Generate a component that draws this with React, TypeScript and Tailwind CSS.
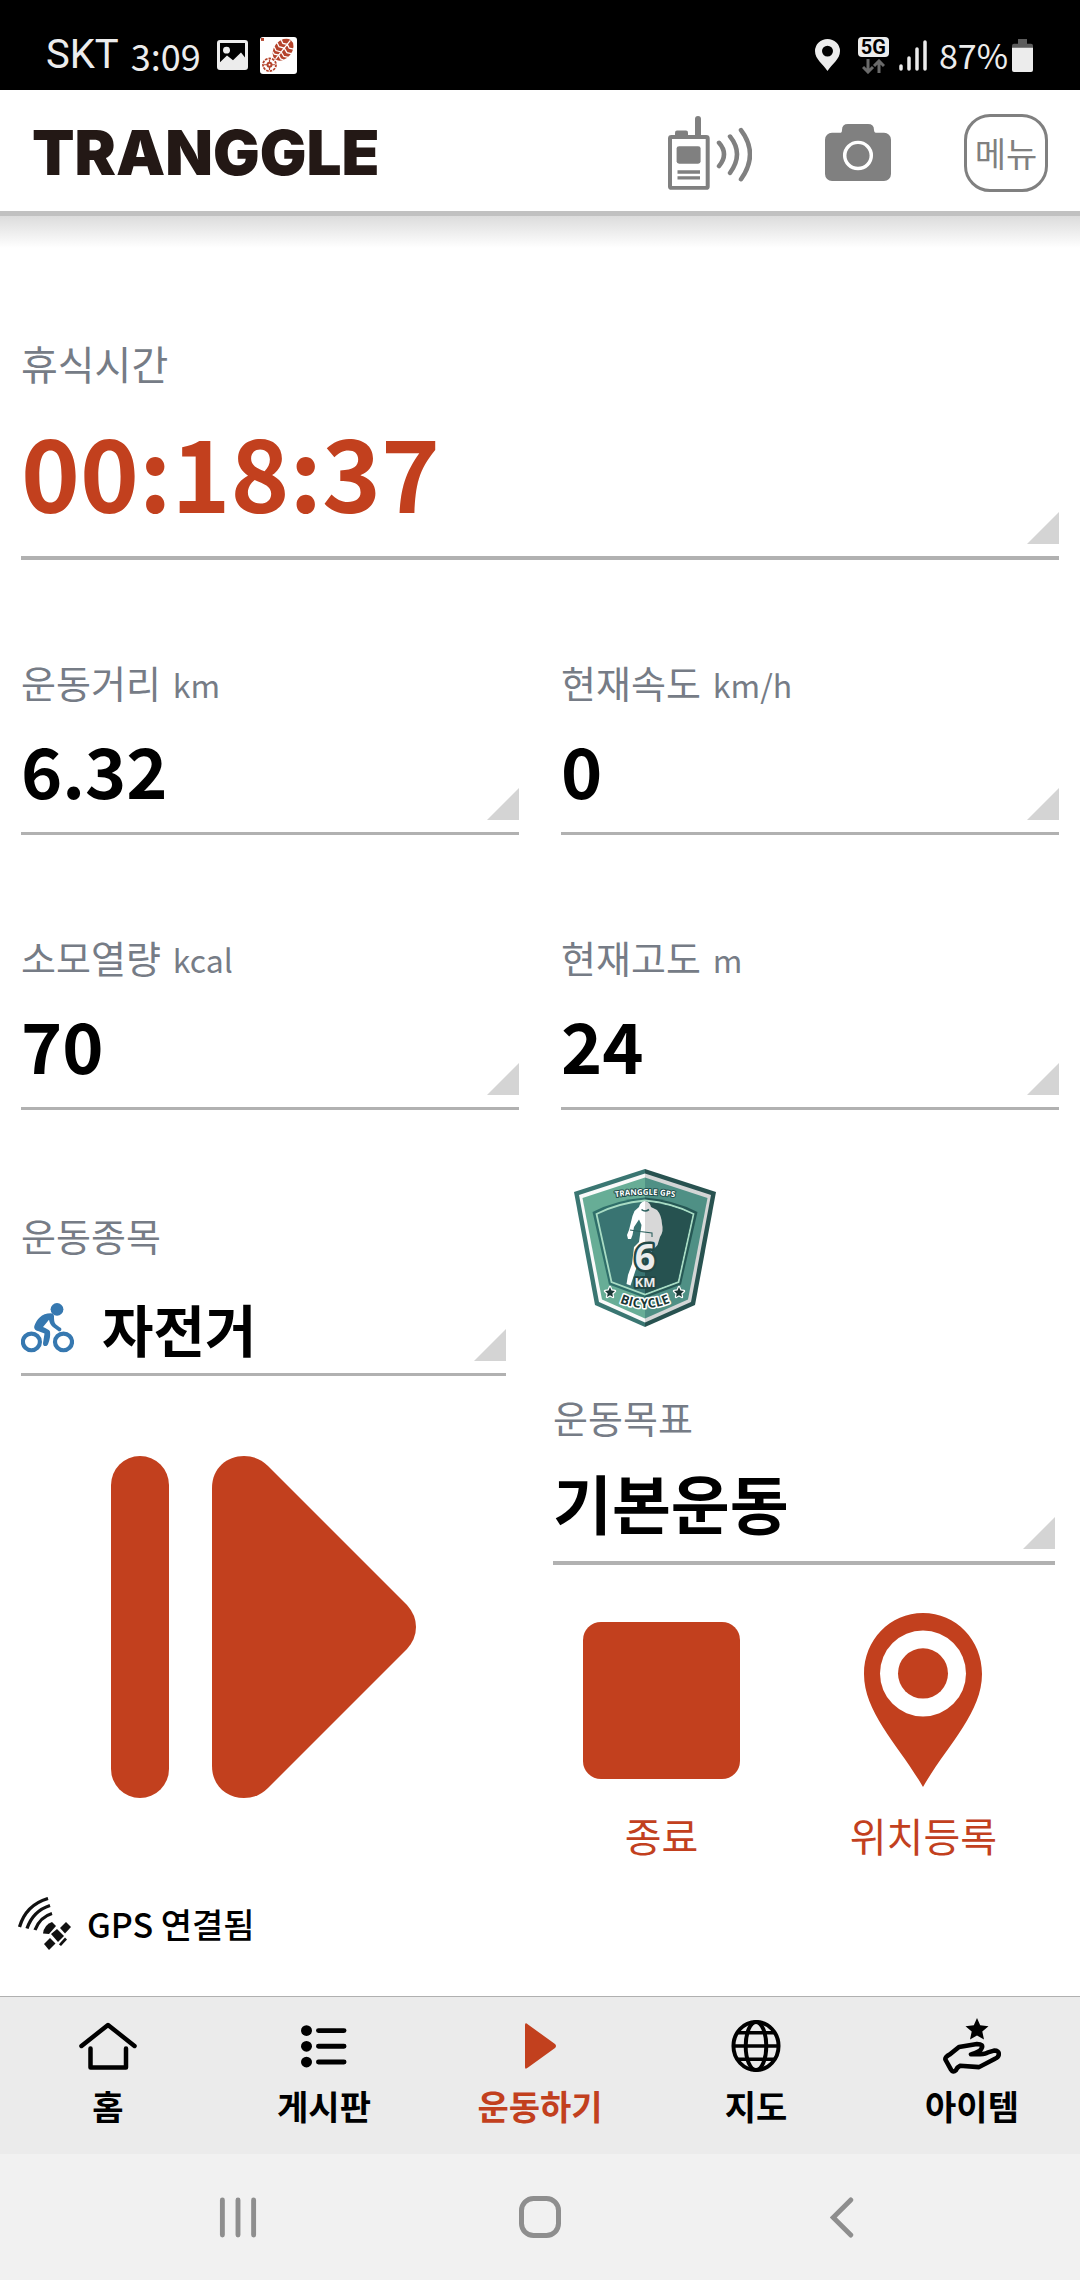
import React from "react";

interface StatCardProps {
  label: string;
  unit?: string;
  value: string;
}

interface GoalCardProps {
  label: string;
  value: string;
}

interface TabProps {
  label: string;
  active?: boolean;
  children: React.ReactNode;
}

function Corner() {
  return (
    <svg className="mb-3 h-8 w-8 shrink-0 self-end" viewBox="0 0 32 32" aria-hidden="true">
      <path d="M32 0V32H0Z" fill="#d4d4d4" />
    </svg>
  );
}

function StatCard({ label, unit, value }: StatCardProps) {
  return (
    <button type="button" className="flex flex-col border-b-[3px] border-[#b1b1b1] text-left">
      <span className="flex items-baseline gap-3 text-[38px] leading-[48px] text-[#767c86]">
        {label}
        {unit && <span className="text-[32px] leading-[32px]">{unit}</span>}
      </span>
      <span className="flex h-[126px] w-full items-center justify-between">
        <span className="text-[70px] leading-[72px] font-bold text-black">{value}</span>
        <Corner />
      </span>
    </button>
  );
}

function GoalCard({ label, value }: GoalCardProps) {
  return (
    <button type="button" className="mt-[66px] flex w-full flex-col border-b-4 border-[#b1b1b1] text-left">
      <span className="text-[38px] leading-[48px] text-[#767c86]">{label}</span>
      <span className="flex h-[120px] w-full items-center justify-between">
        <span className="text-[64px] leading-[72px] font-bold text-black">{value}</span>
        <Corner />
      </span>
    </button>
  );
}

function Tab({ label, active = false, children }: TabProps) {
  return (
    <a
      href="#"
      aria-current={active ? "page" : undefined}
      className={`flex flex-1 flex-col items-center gap-3 ${active ? "text-[#c2401e]" : "text-black"}`}
    >
      <span className="flex h-14 items-center">{children}</span>
      <span className="text-[34px] leading-[40px] font-bold">{label}</span>
    </a>
  );
}

function ShoeIcon() {
  return (
    <svg width="37" height="37" viewBox="0 0 37 38" preserveAspectRatio="none" aria-hidden="true">
      <rect width="37" height="38" rx="3" fill="#fff" />
      <rect x="1" y="1" width="3" height="3" fill="#b5442c" />
      <g transform="rotate(38 23 13)">
        <ellipse cx="23" cy="13" rx="9" ry="12.5" fill="#b5442c" />
        <path
          d="M15 6l4 2 4-2 4 2 4-2M14 11l4 2 5-2 5 2 4-2M14 16l4 2 5-2 5 2 4-2M16 21l3 1 4-2 4 2 3-1M23 1v24"
          stroke="#fff"
          strokeWidth="1.3"
          fill="none"
        />
      </g>
      <circle cx="9.5" cy="28.5" r="6.5" fill="none" stroke="#b5442c" strokeWidth="1.8" strokeDasharray="2.6 1" />
      <circle cx="9.5" cy="28.5" r="3" fill="#b5442c" />
      <path d="M9.5 23v11M4 28.5h11" stroke="#b5442c" strokeWidth="1.2" />
      <circle cx="9.5" cy="28.5" r="1" fill="#fff" />
    </svg>
  );
}

function StatusBar() {
  return (
    <div className="flex h-[90px] items-center justify-between bg-black pt-5 pr-[47px] pl-[46px] text-[#ececec]">
      <div className="flex items-center">
        <span className="font-['Roboto'] text-[40px] leading-[48px]">SKT</span>
        <span className="ml-3 text-[36px] leading-[48px]">3:09</span>
        <svg className="ml-4" width="31" height="30" viewBox="0 0 31 31" preserveAspectRatio="none" aria-hidden="true">
          <path
            fillRule="evenodd"
            fill="currentColor"
            d="M3 0H28a3 3 0 0 1 3 3V28a3 3 0 0 1-3 3H3a3 3 0 0 1-3-3V3A3 3 0 0 1 3 0ZM3 3V23L10 16L16 21L24 13L28 18V3Z"
          />
          <circle cx="9.5" cy="10.5" r="3.5" fill="currentColor" />
        </svg>
        <span className="ml-3">
          <ShoeIcon />
        </span>
      </div>
      <div className="flex items-center">
        <svg width="25" height="32" viewBox="0 0 25 33" preserveAspectRatio="none" aria-hidden="true">
          <path
            fillRule="evenodd"
            fill="currentColor"
            d="M12.5 0A12.5 12.5 0 0 1 25 12.5C25 21 17 26 12.5 33C8 26 0 21 0 12.5A12.5 12.5 0 0 1 12.5 0ZM12.5 7a5.5 5.5 0 1 0 0 11a5.5 5.5 0 0 0 0-11Z"
          />
        </svg>
        <span className="ml-[18px] flex flex-col items-center">
          <span className="rounded bg-[#ececec] px-[3px] font-['Roboto'] text-[20px] leading-[20px] font-bold text-black">
            5G
          </span>
          <svg className="mt-0.5" width="23" height="15" viewBox="0 0 23 15" aria-hidden="true">
            <path
              d="M6 0V12M1 8L6 13L11 8M17 14V2M12 7L17 2L22 7"
              fill="none"
              stroke="#6a6a6a"
              strokeWidth="3"
            />
          </svg>
        </span>
        <svg className="ml-[10px]" width="28" height="31" viewBox="0 0 28 31" aria-hidden="true">
          <path
            d="M2 26V29M10 18V29M18 9V29M26 2V29"
            stroke="currentColor"
            strokeWidth="3.5"
            strokeLinecap="round"
          />
        </svg>
        <span className="ml-3 text-[34px] leading-[48px]">87%</span>
        <svg className="ml-1" width="21" height="33" viewBox="0 0 21 34" preserveAspectRatio="none" aria-hidden="true">
          <path d="M6 0H15V5H19a2 2 0 0 1 2 2V10H0V7a2 2 0 0 1 2-2H6Z" fill="#5c5c5c" />
          <path d="M0 9H21V32a2 2 0 0 1-2 2H2a2 2 0 0 1-2-2Z" fill="currentColor" />
        </svg>
      </div>
    </div>
  );
}

function Header() {
  return (
    <header className="flex h-[126px] items-center justify-between border-b-[5px] border-[#c1c1c1] bg-white px-8 pt-1">
      <h1 className="font-['Inter',sans-serif] text-[62px] leading-[64px] font-black text-[#231815]">TRANGGLE</h1>
      <div className="flex items-center gap-[73px] text-[#808080]">
        <button type="button" aria-label="무전기">
          <svg
            width="84"
            height="74"
            viewBox="0 0 84 76"
            preserveAspectRatio="none"
            fill="none"
            stroke="currentColor"
            aria-hidden="true"
          >
            <rect x="2" y="21.6" width="37.7" height="52.2" rx="1.5" strokeWidth="4" />
            <path d="M30 3V20" strokeWidth="6" strokeLinecap="round" />
            <path d="M7 20V17a2 2 0 0 1 2-2h9a2 2 0 0 1 2 2v3Z" fill="currentColor" stroke="none" />
            <rect x="8.6" y="31" width="24" height="18" rx="2.5" fill="currentColor" stroke="none" />
            <path d="M9.5 57.5H32M9.5 63.5H32" strokeWidth="3.5" />
            <path
              d="M51 27.5Q61 39 51 51.5M62 21Q76 39 62 58.5M73 14.5Q91 39 73 65"
              strokeWidth="4.5"
              strokeLinecap="round"
            />
          </svg>
        </button>
        <button type="button" aria-label="카메라">
          <svg width="66" height="57" viewBox="0 0 66 58" preserveAspectRatio="none" aria-hidden="true">
            <path
              d="M7 9H15Q17 9 17 6Q17 0 23 0H43Q49 0 49 6Q49 9 52 9H59a7 7 0 0 1 7 7V51a7 7 0 0 1-7 7H7a7 7 0 0 1-7-7V16a7 7 0 0 1 7-7Z"
              fill="currentColor"
            />
            <circle cx="33" cy="32" r="13.3" fill="none" stroke="#fff" strokeWidth="3.5" />
          </svg>
        </button>
        <button
          type="button"
          className="h-[78px] w-[84px] rounded-[26px] border-[3px] border-[#808080] text-[34px] leading-[40px]"
        >
          메뉴
        </button>
      </div>
    </header>
  );
}

function BicycleIcon() {
  return (
    <svg width="53" height="50" viewBox="0 0 53 51" preserveAspectRatio="none" fill="#3678b0" aria-hidden="true">
      <circle cx="36" cy="6.5" r="6.4" />
      <circle cx="10.4" cy="39.7" r="8.5" fill="none" stroke="#3678b0" strokeWidth="4.2" />
      <circle cx="42.5" cy="39.7" r="8.5" fill="none" stroke="#3678b0" strokeWidth="4.2" />
      <path d="M30 10.5C20 10.5 16 17 13.5 23C12.5 26 14 28 17 28.5L23.5 31L22 41C21.8 45 26 44.5 27 42C29 37 29.5 33 29 29C28.5 27.5 25 26 22 24.5L28 17C29 22 31 24 34 26L38 29C41 29 41 25.500 39 25L35 22C33 20 33 17 33 13Q32.5 10.5 30 10.5Z" />
    </svg>
  );
}

function BadgeIcon() {
  return (
    <svg
      className="mt-[59px] ml-[21px]"
      width="142"
      height="158"
      viewBox="0 0 142 158"
      role="img"
      aria-label="TRANGGLE GPS 6KM BICYCLE"
    >
      <path d="M71 0L0 23L21 136L71 158Z" fill="#3a7672" />
      <path d="M71 0L142 23L121 136L71 158Z" fill="#285250" />
      <path d="M71 4.500L5 26L25 133L71 153.500Z" fill="#fafafa" />
      <path d="M71 4.500L137 26L117 133L71 153.500Z" fill="#d4d6d6" />
      <path d="M71 8.500L8.500 29L28 130.500L71 149.500Z" fill="#67ad96" />
      <path d="M71 8.500L133.500 29L114 130.500L71 149.500Z" fill="#4f9085" />
      <path d="M71 28.500Q42 31 18.500 43L35 115.500L71 129Z" fill="#2f6f6a" />
      <path d="M71 28.500Q100 31 123.500 43L107 115.500L71 129Z" fill="#265855" />
      <path
        d="M71 31.500Q44 34 22.500 45L37.500 113L71 125.500L104.500 113L119.500 45Q98 34 71 31.500Z"
        fill="#397472"
        stroke="#a9dcc4"
        strokeWidth="1.800"
      />
      <path d="M71 32.500Q97 35 118.500 45.500L103.700 112.300L71 124.500Z" fill="#265250" />
      <path
        d="M71 32Q66 33 65 38L60.500 42Q58 47 57 53L55 61L53 66L54 70L57 70L58.500 66L60 58L65 50.500L67.500 56L66 66L65 73L60 78L58 95L54 106L52.500 115L56.500 116.500L60 106L63 97L71 90Z"
        fill="#fff"
      />
      <path d="M71 32Q76 33 77 38L83 41Q87.500 46 88 55Q90 62 86 68L83.500 76L71 90Z" fill="#d8d8d8" />
      <path d="M56 61L66 62.500L78 64V68" stroke="#2c605e" strokeWidth="1.100" fill="none" />
      <path d="M67.500 40.500Q71 43.500 75 40.500" stroke="#2c605e" strokeWidth="1.600" fill="none" />
      <path id="badge-top" d="M30 30.500Q71 21 112 30.500" fill="none" />
      <path id="badge-bottom" d="M35 128Q71 150 107 128" fill="none" />
      <g className="font-['Open_Sans',sans-serif]" fontWeight="700" textAnchor="middle" strokeLinejoin="round">
        <text fontSize="8" fill="#fff" stroke="#234e4c" strokeWidth="2" paintOrder="stroke">
          <textPath href="#badge-top" startOffset="50%">
            TRANGGLE GPS
          </textPath>
        </text>
        <text x="71" y="101" fontSize="36" fill="#ececec" stroke="#234947" strokeWidth="5" paintOrder="stroke">
          6
        </text>
        <text x="71" y="117.500" fontSize="13" fill="#ececec" stroke="#234947" strokeWidth="4" paintOrder="stroke">
          KM
        </text>
        <text fontSize="13" fill="#1b3836" stroke="#fff" strokeWidth="3" paintOrder="stroke">
          <textPath href="#badge-bottom" startOffset="50%">
            BICYCLE
          </textPath>
        </text>
      </g>
      <g fill="#1b3836" stroke="#fff" strokeWidth="2.400" paintOrder="stroke" strokeLinejoin="round">
        <path
          id="badge-star"
          d="M36 118L37.500 121.500L41 122L38.300 124.500L39 128L36 126.300L33 128L33.700 124.500L31 122L34.500 121.500Z"
        />
        <use href="#badge-star" x="69" />
      </g>
    </svg>
  );
}

function SatelliteIcon() {
  return (
    <svg width="53" height="53" viewBox="0 0 53 53" fill="none" stroke="#111" aria-hidden="true">
      <path d="M30 1.500Q8 8 1.500 30M32 8.500Q15 14 9 31.500M34 16.500Q22 20 17 33" strokeWidth="3.300" />
      <g fill="#111" stroke="none">
        <path d="M34 25L38 29L31 37L25 36.500Q26 28 34 25Z" />
        <path d="M33 37L39 32L46 39L40 45Z" />
        <path d="M42 31L48 25L53 30L47 36.500Z" />
        <path d="M26 47L32 41L37.500 46.500L31 53Z" />
        <path d="M42 46L47 40.500L49 42.500L43 49L41 47.500Z" />
      </g>
    </svg>
  );
}

export default function App() {
  return (
    <div className="flex min-h-screen flex-col bg-white font-['Noto_Sans_CJK_KR',sans-serif]">
      <StatusBar />
      <Header />

      <main className="flex-1 bg-white">
        <div className="h-8 bg-linear-to-b from-[#dcdcdc] to-white" />

        <section className="px-[21px] pt-[91px]">
          <button type="button" className="flex w-full flex-col border-b-4 border-[#b1b1b1] text-left">
            <span className="text-[40px] leading-[48px] text-[#767c86]">휴식시간</span>
            <span className="flex h-[169px] w-full items-center justify-between">
              <span className="pb-1 text-[100px] leading-[104px] font-bold text-[#c2401e]">00:18:37</span>
              <Corner />
            </span>
          </button>

          <div className="mt-[98px] grid grid-cols-2 gap-x-[42px] gap-y-[98px]">
            <StatCard label="운동거리" unit="km" value="6.32" />
            <StatCard label="현재속도" unit="km/h" value="0" />
            <StatCard label="소모열량" unit="kcal" value="70" />
            <StatCard label="현재고도" unit="m" value="24" />
          </div>
        </section>

        <section className="grid grid-cols-[485fr_502fr] gap-x-[47px] pr-[25px] pl-[21px]">
          <div className="pt-[101px]">
            <button type="button" className="flex w-full flex-col border-b-[3px] border-[#b1b1b1] text-left">
              <span className="text-[38px] leading-[48px] text-[#767c86]">운동종목</span>
              <span className="flex h-[114px] w-full items-center justify-between">
                <span className="flex items-center gap-7 pt-6">
                  <BicycleIcon />
                  <span className="text-[56px] leading-[64px] font-bold text-black">자전거</span>
                </span>
                <Corner />
              </span>
            </button>
            <button type="button" aria-label="다시 시작" className="mx-auto mt-20 block">
              <svg width="305" height="342" viewBox="0 0 305 342" fill="#c2401e" aria-hidden="true">
                <rect width="58" height="342" rx="29" />
                <path d="M101 32C101 12 116 0 133 0Q147 0 157 10L296 149Q305 159 305 171Q305 183 296 193L157 332Q147 342 133 342C116 342 101 330 101 310Z" />
              </svg>
            </button>
          </div>

          <div>
            <BadgeIcon />
            <GoalCard label="운동목표" value="기본운동" />
            <div className="mt-12 flex justify-between pr-[58px] pl-[30px] text-[40px] leading-[48px] text-[#c2401e]">
              <button type="button" className="flex flex-col items-center gap-6">
                <span className="flex h-[174px] items-center">
                  <span className="h-[157px] w-[157px] rounded-[18px] bg-[#c2401e]" />
                </span>
                종료
              </button>
              <button type="button" className="flex flex-col items-center gap-6">
                <svg
                  width="118"
                  height="174"
                  viewBox="0 0 118 180"
                  preserveAspectRatio="none"
                  fill="#c2401e"
                  aria-hidden="true"
                >
                  <path d="M59 0C92 0 118 28 118 63C118 104 82 138 59 180C36 138 0 104 0 63C0 28 26 0 59 0Z" />
                  <ellipse cx="59" cy="62.5" rx="43" ry="44.5" fill="#fff" />
                  <ellipse cx="59" cy="62.5" rx="25" ry="26" />
                </svg>
                위치등록
              </button>
            </div>
          </div>
        </section>

        <div className="mt-[38px] mb-[46px] flex items-center gap-4 pl-[18px]">
          <SatelliteIcon />
          <p className="text-[34px] leading-[40px] font-medium text-black">GPS 연결됨</p>
        </div>
      </main>

      <nav className="flex border-t border-[#b0b0b0] bg-[#ebebeb] pt-[21px] pb-7">
        <Tab label="홈">
          <svg
            width="58"
            height="48"
            viewBox="0 0 58 49"
            preserveAspectRatio="none"
            fill="none"
            stroke="currentColor"
            strokeWidth="4.5"
            strokeLinecap="round"
            strokeLinejoin="round"
            aria-hidden="true"
          >
            <path d="M2.5 24.5L29 3L55.5 24.5M11.5 27V46.5H47V27" />
          </svg>
        </Tab>
        <Tab label="게시판">
          <svg width="46" height="43" viewBox="0 0 46 44" preserveAspectRatio="none" fill="currentColor" aria-hidden="true">
            <circle cx="5.5" cy="5.7" r="5.5" />
            <circle cx="5.5" cy="21.8" r="5.5" />
            <circle cx="5.5" cy="37.9" r="5.5" />
            <path
              d="M17.5 5.7H43M17.5 21.8H43M17.5 37.9H43"
              stroke="currentColor"
              strokeWidth="5"
              strokeLinecap="round"
            />
          </svg>
        </Tab>
        <Tab label="운동하기" active>
          <svg width="31" height="46" viewBox="0 0 31 48" preserveAspectRatio="none" fill="currentColor" aria-hidden="true">
            <path d="M0 2Q0-1 3 1.5L30 22Q32 24 30 26L3 46.5Q0 49 0 46Z" />
          </svg>
        </Tab>
        <Tab label="지도">
          <svg width="50" height="52" viewBox="0 0 50 53" fill="none" stroke="currentColor" strokeWidth="4" aria-hidden="true">
            <ellipse cx="25" cy="26.5" rx="23" ry="24.5" />
            <ellipse cx="25" cy="26.5" rx="10.5" ry="24.5" />
            <path d="M2 26.5H48M6 13H44M6 40H44" strokeWidth="3.6" />
          </svg>
        </Tab>
        <Tab label="아이템">
          <svg
            width="58"
            height="56"
            viewBox="0 0 58 57"
            preserveAspectRatio="none"
            fill="none"
            stroke="currentColor"
            strokeWidth="4.6"
            strokeLinejoin="round"
            strokeLinecap="round"
            aria-hidden="true"
          >
            <path
              d="M34 0L37.2 7.5L45.5 8.3L39.3 13.8L41 22L34 17.8L27 22L28.7 13.8L22.5 8.3L30.8 7.5Z"
              fill="currentColor"
              stroke="none"
            />
            <path d="M2.5 42.5Q1.5 40 7 37L16 29.5L34 26.5Q41 26.5 38.5 31Q37.5 34 28 37H37Q43 36.5 45 35L51 33.2Q56 33 55.8 37Q55.5 40 52 41.5L36 50L17 48.7Q14 50 13 53Q10 56 8 52.5Z" />
          </svg>
        </Tab>
      </nav>

      <div className="grid h-[126px] grid-cols-3 items-center justify-items-center bg-[#f1f1f1] px-[87px] text-[#8e8e8e]">
        <button type="button" aria-label="최근 앱">
          <svg width="38" height="41" viewBox="0 0 38 42" aria-hidden="true">
            <path d="M3 3V39M19 3V39M35 3V39" stroke="currentColor" strokeWidth="5" strokeLinecap="round" />
          </svg>
        </button>
        <button type="button" aria-label="홈 화면">
          <svg width="42" height="42" viewBox="0 0 42 42" aria-hidden="true">
            <rect x="2.5" y="2.5" width="37" height="37" rx="12" fill="none" stroke="currentColor" strokeWidth="5" />
          </svg>
        </button>
        <button type="button" aria-label="뒤로">
          <svg width="24" height="41" viewBox="0 0 24 42" aria-hidden="true">
            <path d="M21 3L3 21L21 39" fill="none" stroke="currentColor" strokeWidth="5" strokeLinecap="round" />
          </svg>
        </button>
      </div>
    </div>
  );
}
